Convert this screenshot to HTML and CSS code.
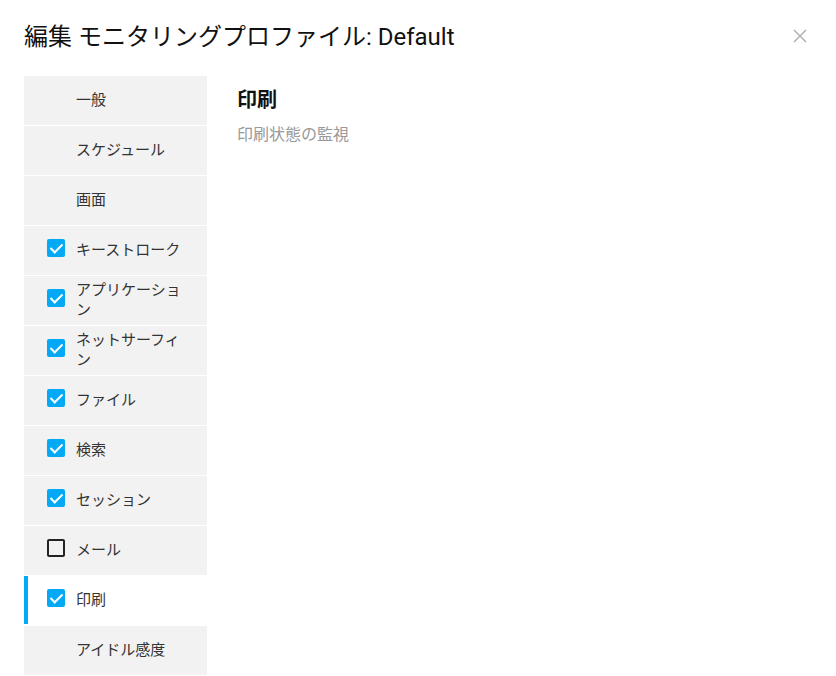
FILE: index.html
```html
<!DOCTYPE html>
<html lang="ja">
<head>
<meta charset="utf-8">
<link rel="stylesheet" href="styles.css">
</head>
<body>
<div class="dialog">
  <header class="header">
    <h1 class="title">編集 モニタリングプロファイル: Default</h1>
    <button class="close" aria-label="閉じる">
      <svg width="14" height="14" viewBox="0 0 14 14"><path d="M1 1L13 13M13 1L1 13" stroke="#b3b3b3" stroke-width="1.6"/></svg>
    </button>
  </header>
  <div class="body">
    <nav class="side">
      <div class="item"><span class="box none"></span><span class="label">一般</span></div>
      <div class="item"><span class="box none"></span><span class="label">スケジュール</span></div>
      <div class="item"><span class="box none"></span><span class="label">画面</span></div>
      <div class="item"><span class="box on"></span><span class="label">キーストローク</span></div>
      <div class="item"><span class="box on"></span><span class="label">アプリケーション</span></div>
      <div class="item"><span class="box on"></span><span class="label">ネットサーフィン</span></div>
      <div class="item"><span class="box on"></span><span class="label">ファイル</span></div>
      <div class="item"><span class="box on"></span><span class="label">検索</span></div>
      <div class="item"><span class="box on"></span><span class="label">セッション</span></div>
      <div class="item"><span class="box off"></span><span class="label">メール</span></div>
      <div class="item active"><span class="box on"></span><span class="label">印刷</span></div>
      <div class="item"><span class="box none"></span><span class="label">アイドル感度</span></div>
    </nav>
    <main class="content">
      <h2 class="heading">印刷</h2>
      <p class="desc">印刷状態の監視</p>
    </main>
  </div>
</div>
</body>
</html>
```

FILE: styles.css
```css
* { box-sizing: border-box; }
html, body { margin: 0; padding: 0; background: #fff; }
body {
  font-family: Roboto, "Noto Sans CJK JP", sans-serif;
  color: #222;
  overflow: hidden;
}
.dialog { width: 836px; height: 676px; padding: 0 24px; }
.header {
  height: 76px;
  display: flex;
  align-items: flex-start;
  justify-content: space-between;
}
.title {
  margin: 21px 0 0;
  font-size: 24px;
  font-weight: 400;
  line-height: 32px;
  color: #111;
}
.close {
  margin: 29px 5px 0 0;
  width: 14px; height: 14px;
  padding: 0; border: 0; background: none;
  display: flex;
}
.body { display: flex; }
.side { width: 183px; display: flex; flex-direction: column; }
.item {
  height: 50px;
  background: #f2f2f2;
  border-bottom: 1px solid #fff;
  display: flex;
  align-items: center;
  padding: 0 25px 1px 23px;
  position: relative;
}
.item.active { background: #fff; }
.item.active::before {
  content: "";
  position: absolute;
  left: 0; top: 0; bottom: 1px;
  width: 4px;
  background: #03a9f4;
}
.box {
  width: 18px; height: 18px;
  flex: none;
  margin: 0 11px 4px 0;
  border-radius: 2px;
  position: relative;
}
.box.on { background: #03a9f4; }
.box.on::after {
  content: "";
  position: absolute;
  left: 6px; top: 2px;
  width: 5px; height: 10px;
  border: solid #fff;
  border-width: 0 2px 2px 0;
  transform: rotate(45deg);
}
.box.off { border: 2px solid #222; }
.label {
  font-size: 15px;
  line-height: 20px;
  color: #333;
}
.content { padding: 10px 0 0 30px; }
.heading {
  margin: 0;
  font-size: 20px;
  font-weight: 700;
  line-height: 28px;
  color: #111;
}
.desc {
  margin: 9px 0 0;
  font-size: 16px;
  line-height: 24px;
  color: #999;
}
```
